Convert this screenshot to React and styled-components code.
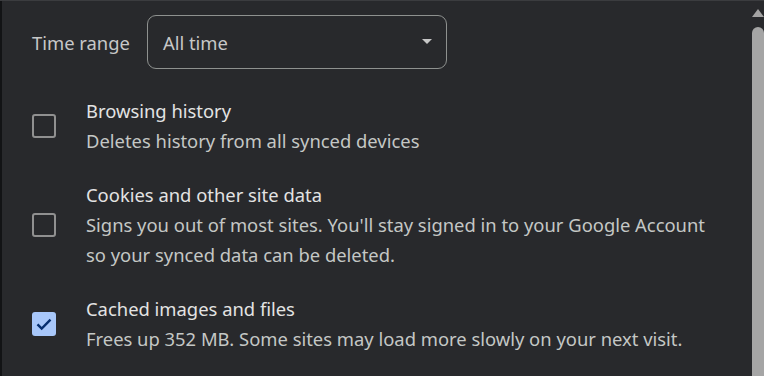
import React from "react"
import styled, { createGlobalStyle } from "styled-components"

const GlobalStyle = createGlobalStyle`
  html, body {
    margin: 0;
    padding: 0;
    background: #28292c;
  }
  body {
    font-family: "Noto Sans", "Open Sans", sans-serif;
  }
`

// Whole window: dark strip, dialog body, scrollbar
const Frame = styled.div`
  display: flex;
  width: 764px;
  height: 376px;
  overflow: hidden;
  border-top: 1px solid #3b3c3f;
  box-sizing: border-box;
`

const BackStrip = styled.div`
  width: 2px;
  flex: none;
  background: #121315;
`

const Panel = styled.div`
  flex: 1;
  display: flex;
  flex-direction: column;
  padding: 14px 0 0 30px;
  background: #28292c;
  color: #e3e3e3;
`

const RangeRow = styled.div`
  display: flex;
  align-items: center;
  gap: 17px;
  height: 54px;
`

const RangeLabel = styled.span`
  font-size: 18.4px;
  color: #c7c7c7;
`

const Select = styled.div`
  width: 300px;
  height: 54px;
  box-sizing: border-box;
  border: 1px solid #8e918f;
  border-radius: 9px;
  display: flex;
  align-items: center;
  justify-content: space-between;
  padding: 0 14px 0 15px;
  font-size: 18.4px;
  color: #c7c7c7;
`

const Caret = styled.span`
  width: 0;
  height: 0;
  border-left: 5.5px solid transparent;
  border-right: 5.5px solid transparent;
  border-top: 5.5px solid #c7c7c7;
  margin-top: -2px;
`

const List = styled.div`
  display: flex;
  flex-direction: column;
  gap: 24px;
  margin-top: 27px;
`

const Option = styled.div`
  display: flex;
  align-items: center;
  gap: 30px;
`

const Box = styled.div`
  flex: none;
  width: 24px;
  height: 24px;
  box-sizing: border-box;
  border-radius: 3px;
  border: ${({ checked }) => (checked ? "none" : "2.5px solid #909090")};
  background: ${({ checked }) => (checked ? "#a8c7fa" : "transparent")};
  display: flex;
  align-items: center;
  justify-content: center;
`

const Texts = styled.div`
  display: flex;
  flex-direction: column;
  font-size: 18.4px;
  line-height: 30px;
`

const Title = styled.div`
  color: #e3e3e3;
`

const Sub = styled.div`
  color: #c4c7c5;
`

const Scrollbar = styled.div`
  width: 12px;
  flex: none;
  display: flex;
  flex-direction: column;
  align-items: center;
  padding-top: 8px;
  gap: 10px;
`

const ArrowUp = styled.span`
  width: 0;
  height: 0;
  border-left: 6px solid transparent;
  border-right: 6px solid transparent;
  border-bottom: 8px solid #a3a3a3;
`

const Thumb = styled.div`
  flex: 1;
  width: 12px;
  background: #a5a5a5;
  border-radius: 6px 6px 0 0;
`

const options = [
  {
    title: "Browsing history",
    lines: ["Deletes history from all synced devices"],
    checked: false,
  },
  {
    title: "Cookies and other site data",
    lines: [
      "Signs you out of most sites. You'll stay signed in to your Google Account",
      "so your synced data can be deleted.",
    ],
    checked: false,
  },
  {
    title: "Cached images and files",
    lines: ["Frees up 352 MB. Some sites may load more slowly on your next visit."],
    checked: true,
  },
]

const Check = () => (
  <svg width="20" height="20" viewBox="0 0 20 20">
    <path d="M3.5 10.3l4.2 4.2 8.8-8.8" fill="none" stroke="#062e6f" strokeWidth="2.4" />
  </svg>
)

const App = () => (
  <>
    <GlobalStyle />
    <Frame>
      <BackStrip />
      <Panel>
        <RangeRow>
          <RangeLabel>Time range</RangeLabel>
          <Select>
            All time
            <Caret />
          </Select>
        </RangeRow>
        <List>
          {options.map(({ title, lines, checked }) => (
            <Option key={title}>
              <Box checked={checked}>{checked && <Check />}</Box>
              <Texts>
                <Title>{title}</Title>
                {lines.map(line => (
                  <Sub key={line}>{line}</Sub>
                ))}
              </Texts>
            </Option>
          ))}
        </List>
      </Panel>
      <Scrollbar>
        <ArrowUp />
        <Thumb />
      </Scrollbar>
    </Frame>
  </>
)

export default App
